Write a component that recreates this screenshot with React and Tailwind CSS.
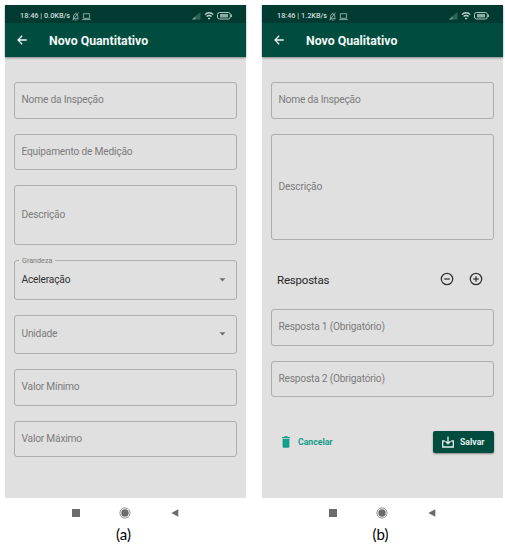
import React from "react";

function StatusIcons() {
  return (
    <svg width="23" height="9" viewBox="0 0 23 9" fill="none" className="ml-[2px]">
      <g stroke="#a9bfba" strokeWidth="0.8">
        <path d="M0.8 6.8h5.800M1.6 6.8V4a2.1 2.100 0 0 1 4.200 0v2.800M2.9 8.100h1.600M0.6 8.300L6.6 0.600M3.7 0.8v1" />
        <path d="M11.4 1.7h6.2v4.6h-6.2zM10.2 7.6h8.6" />
      </g>
    </svg>
  );
}

function SignalIcons() {
  return (
    <svg width="42" height="10" viewBox="0 0 42 10" fill="none">
      <path d="M-0.5 8.5L8.5 1v7.5z" fill="#2d6459" />
      <path d="M0 8.500h3.500V5.400z" fill="#73978f" />
      <g stroke="#bed0cc" strokeWidth="1.4">
        <path d="M13 3.600a5.500 5.500 0 0 1 8.200 0M14.600 5.500a3.500 3.500 0 0 1 5 0" />
        <path d="M16 7.5h2.200" />
      </g>
      <rect x="25.5" y="1.500" width="12.800" height="6.500" rx="2" stroke="#b3c9c4" strokeWidth="1" />
      <rect x="28" y="3" width="8" height="3.500" fill="#8cada6" />
      <path d="M39.4 3.500v2.500" stroke="#b3c9c4" />
    </svg>
  );
}

function Header({ title, rate }) {
  return (
    <header className="relative z-10 shrink-0 shadow-[0_1px_2px_rgba(0,0,0,0.4)]">
      <div className="flex h-[18px] items-center justify-between bg-[#003a30] pt-[4px] pr-[12px] pl-[15px]">
        <div className="flex items-center text-[7.3px] font-medium whitespace-nowrap text-[#d0dcda]">
          <span className="w-[50px]">18:46 | {rate}</span>
          <StatusIcons />
        </div>
        <SignalIcons />
      </div>
      <div className="flex h-[34px] items-center bg-[#004d40] pl-[12px] text-[#f2f6f5]">
        <svg width="10" height="10" viewBox="0 0 10 10" fill="none" stroke="currentColor" strokeWidth="1.3">
          <path d="M9.7 5H1.2M5.2 0.8L1 5l4.200 4.200" />
        </svg>
        <h1 className="mt-[2px] ml-[22px] text-[12.3px] leading-4 font-bold whitespace-nowrap">{title}</h1>
      </div>
    </header>
  );
}

function NavBar() {
  return (
    <nav className="flex h-[28px] shrink-0 items-center bg-white pt-[2px] pl-[67px] text-[#6b6b6b]">
      <div className="h-[7.5px] w-[7.5px] bg-current" />
      <svg width="12" height="12" viewBox="0 0 12 12" className="ml-[39.5px]">
        <circle cx="6" cy="6" r="5.1" fill="none" stroke="#888888" strokeWidth="0.9" />
        <circle cx="6" cy="6" r="3.7" fill="currentColor" />
      </svg>
      <svg width="8" height="8" viewBox="0 0 8 8" className="ml-[39.5px]">
        <path d="M0.300 4L7.300 0.300v7.400z" fill="currentColor" />
      </svg>
    </nav>
  );
}

function Phone({ title, rate, caption, children }) {
  return (
    <section className="flex w-[241px] shrink-0 flex-col">
      <Header title={title} rate={rate} />
      <main className="flex h-[441px] shrink-0 flex-col bg-[#e0e0e0] px-[9px] pt-[25px]">{children}</main>
      <NavBar />
      <p className="pr-1 text-center font-['Lato',sans-serif] text-[15px] leading-[17px] text-black">{caption}</p>
    </section>
  );
}

function Field({ label, size = "h-[36.5px]", gap = "mb-[15px]", select = false, value }) {
  return (
    <div className={`relative flex shrink-0 items-center justify-between rounded-[3px] border border-[#adadad] pr-[10.5px] pl-[6.5px] ${size} ${gap}`}>
      {value && (
        <span className="absolute -top-[5px] left-[4px] bg-[#e0e0e0] px-[3px] text-[7.2px] leading-[9px] text-[#7b7b7b]">{label}</span>
      )}
      <span className={`text-[10.2px] leading-3 tracking-[-0.2px] whitespace-nowrap ${value ? "text-[#333333]" : "text-[#7c7c7c]"}`}>
        {value || label}
      </span>
      {select && (
        <svg width="7" height="4" viewBox="0 0 7 4">
          <path d="M0.5 0.3h6L3.5 3.5z" fill="#6e6e6e" />
        </svg>
      )}
    </div>
  );
}

function CircleButton({ plus }) {
  return (
    <button aria-label={plus ? "Adicionar" : "Remover"} className="block">
      <svg width="14" height="14" viewBox="0 0 14 14" fill="none" stroke="#333333" strokeWidth="1.25">
        <circle cx="7" cy="7" r="5.7" />
        <path d="M4.2 7h5.6" />
        {plus && <path d="M7 4.2v5.6" />}
      </svg>
    </button>
  );
}

export default function App() {
  return (
    <div className="flex h-[547px] w-[505px] gap-[16px] overflow-hidden bg-white pt-[5px] pl-[5px] font-['Roboto',sans-serif]">
      <Phone title="Novo Quantitativo" rate="0.0KB/s" caption="(a)">
        <Field label="Nome da Inspeção" />
        <Field label="Equipamento de Medição" />
        <Field label="Descrição" size="h-[60px]" />
        <Field label="Grandeza" value="Aceleração" select size="h-[39.5px]" />
        <Field label="Unidade" select size="h-[39.5px]" />
        <Field label="Valor Mínimo" />
        <Field label="Valor Máximo" />
      </Phone>
      <Phone title="Novo Qualitativo" rate="1.2KB/s" caption="(b)">
        <Field label="Nome da Inspeção" />
        <Field label="Descrição" size="h-[106.5px]" gap="mb-0" />
        <div className="flex h-[69px] shrink-0 items-center pt-[9px] pr-[11px] pl-[6px]">
          <h2 className="flex-1 pt-px text-[11.5px] leading-4 tracking-[-0.2px] text-[#292929]">Respostas</h2>
          <div className="flex gap-[15.5px]">
            <CircleButton />
            <CircleButton plus />
          </div>
        </div>
        <Field label="Resposta 1 (Obrigatório)" />
        <Field label="Resposta 2 (Obrigatório)" gap="mb-[34px]" />
        <div className="flex h-[22px] shrink-0 items-center justify-between text-[8.7px] leading-3 font-bold">
          <button className="flex items-center gap-[8px] pl-[11px] text-[#159d8c]">
            <svg width="8" height="12" viewBox="0 0 8 12" fill="currentColor">
              <path d="M0 0.9h2L2.6 0.2h2.800L6 0.9h2v1.300H0zM0.6 2.9h6.800v7.700a1.2 1.2 0 0 1-1.2 1.2H1.8a1.2 1.2 0 0 1-1.2-1.2z" />
            </svg>
            Cancelar
          </button>
          <button className="flex h-[22px] w-[61px] items-center gap-[6px] rounded-[2px] bg-[#004d40] pl-[9px] text-[#e4eeec] shadow-[0_1px_2px_rgba(0,0,0,0.4)]">
            <svg width="12" height="12" viewBox="0 0 12 12" fill="none" stroke="currentColor" strokeWidth="1.3">
              <path d="M2.8 5H0.7v6h10.6V5H9.2M6 0.5v7.3M3.5 5.3L6 7.9l2.500-2.600" />
            </svg>
            Salvar
          </button>
        </div>
      </Phone>
    </div>
  );
}
